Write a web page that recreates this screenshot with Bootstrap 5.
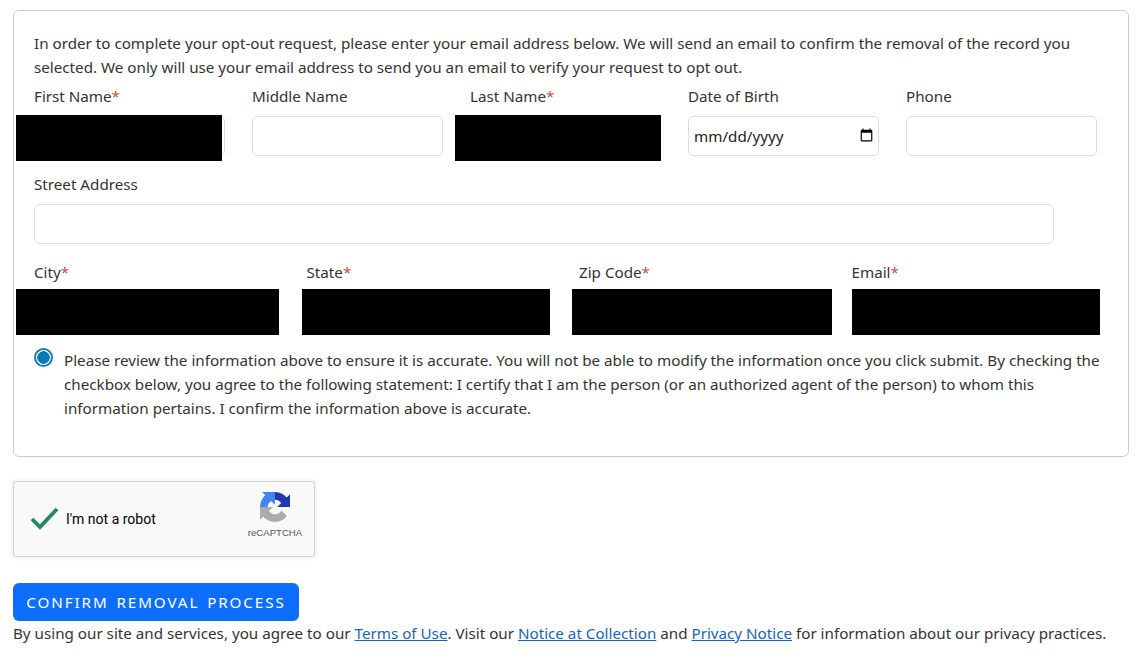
<!DOCTYPE html>
<html lang="en"><head><meta charset="utf-8"><title>Confirm removal</title>
<link href="https://cdn.jsdelivr.net/npm/bootstrap@5.3.0/dist/css/bootstrap.min.css" rel="stylesheet">
<style>
body{font-family:"Noto Sans","Open Sans",sans-serif;font-size:15.2px;line-height:24px;color:#333;background:#fff;padding:10px 12px 0 13px;overflow:hidden}
.panel{border:1px solid #ccc;border-radius:6px;padding:20px 20px 24px 20px;height:447px}
.panel p{margin:0 0 5px}
.fld-label{display:block;margin:0 0 8px;height:24px}
.req{color:#c0533a}
.fld{height:40px;border:1px solid #ddd;border-radius:5px;padding:0 5px;font:inherit;color:#222;display:block}
.fld::-webkit-calendar-picker-indicator{margin:0 -3px 0 0;filter:contrast(2)}
.cell-s{flex:0 0 218px}.cell-s .fld{width:191px}
.wide{width:1020px}
.rowa,.rowb,.rowc{margin-bottom:16px}
.cell-m{flex:0 0 272.5px}.cell-m .fld{width:240px}
.holder{position:relative}
.mask{position:absolute;background:#000;z-index:2;height:46px}
.m1,.m3{top:31px;width:206px}
.m1{left:-18px}.m3{left:-15px}
.c1,.c2,.c3,.c4{top:29px}
.c1{left:-18px;width:263px}.c2{left:-4.5px;width:248px}.c3{left:-7px;width:260px}.c4{left:.5px;width:248px}
.radio-dot{appearance:none;width:19px;height:19px;flex:none;border-radius:50%;border:2px solid #1a7fb0;background:radial-gradient(circle,#0d7ab5 0 6px,#fff 6.5px);margin:0 11px 0 0}
.robot{width:302px;height:76px;background:#f9f9f9;border:1px solid #d3d3d3;border-radius:3px;box-shadow:0 0 4px 1px rgba(0,0,0,.08);margin-top:24px;font-family:Roboto,"Liberation Sans",sans-serif;font-size:14px;color:#000;position:relative}
.robot-lbl{margin-left:6px}
.rc-brand{position:absolute;left:229px;top:10px;width:64px;font-family:"Liberation Sans",sans-serif;font-size:9.6px;line-height:12px;color:#555}
.rc-icon{margin-bottom:5px}
.go{margin-top:26px;background:#0d6efd;color:#fff;border:0;border-radius:6px;height:38px;width:286px;padding:0;font-size:15.2px;letter-spacing:1.9px;word-spacing:2px;display:block}
.legal{margin:0}
.legal a{color:#1a64b4}
</style></head><body>
<div class="panel">
<p>In order to complete your opt-out request, please enter your email address below. We will send an email to confirm the removal of the record you selected. We only will use your email address to send you an email to verify your request to opt out.</p>
<div class="d-flex rowa">
<div class="cell-s holder"><label class="fld-label">First Name<span class="req">*</span></label><input class="fld" type="text"><div class="mask m1"></div></div>
<div class="cell-s"><label class="fld-label">Middle Name</label><input class="fld" type="text"></div>
<div class="cell-s holder"><label class="fld-label">Last Name<span class="req">*</span></label><input class="fld" type="text"><div class="mask m3"></div></div>
<div class="cell-s"><label class="fld-label">Date of Birth</label><input class="fld" type="date"></div>
<div class="cell-s"><label class="fld-label">Phone</label><input class="fld" type="text"></div>
</div>
<div class="rowb"><label class="fld-label">Street Address</label><input class="fld wide" type="text"></div>
<div class="d-flex rowc">
<div class="cell-m holder"><label class="fld-label">City<span class="req">*</span></label><input class="fld" type="text"><div class="mask c1"></div></div>
<div class="cell-m holder"><label class="fld-label">State<span class="req">*</span></label><input class="fld" type="text"><div class="mask c2"></div></div>
<div class="cell-m holder"><label class="fld-label">Zip Code<span class="req">*</span></label><input class="fld" type="text"><div class="mask c3"></div></div>
<div class="cell-m holder"><label class="fld-label">Email<span class="req">*</span></label><input class="fld" type="text"><div class="mask c4"></div></div>
</div>
<div class="d-flex"><input class="radio-dot" type="radio" checked><div>Please review the information above to ensure it is accurate. You will not be able to modify the information once you click submit. By checking the checkbox below, you agree to the following statement: I certify that I am the person (or an authorized agent of the person) to whom this information pertains. I confirm the information above is accurate.</div></div>
</div>
<div class="robot d-flex align-items-center">
<svg class="ms-3" width="30" height="24" viewBox="0 0 30 24"><path d="M2 12l8 8L27 2" fill="none" stroke="#1f8a5a" stroke-width="3.8"/></svg>
<span class="robot-lbl">I'm not a robot</span>
<div class="text-center rc-brand">
<svg width="30" height="30" viewBox="0 0 64 64" class="d-block mx-auto rc-icon">
<path d="M64 31.955l-.033-1.37V4.687l-7.16 7.16C50.948 4.674 42.033.093 32.05.093c-10.4 0-19.622 4.96-25.458 12.64l11.736 11.86a15.55 15.55 0 0 1 4.754-5.334c2.05-1.6 4.952-2.906 8.968-2.906.485 0 .86.057 1.135.163 4.976.393 9.288 3.14 11.827 7.124l-8.307 8.307c10.522-.04 22.4-.066 27.295.005" fill="#1c3aa9"/>
<path d="M31.862.094l-1.37.033H4.594l7.16 7.16C4.58 13.147 0 22.06 0 32.046c0 10.4 4.96 19.622 12.64 25.458l11.86-11.736a15.55 15.55 0 0 1-5.334-4.754c-1.6-2.05-2.906-4.952-2.906-8.968 0-.485.057-.86.163-1.135.393-4.976 3.14-9.288 7.124-11.827l8.307 8.307c-.04-10.522-.066-22.4.005-27.295" fill="#4285f4"/>
<path d="M.001 32.045l.033 1.37v25.898l7.16-7.16c5.86 7.173 14.775 11.754 24.76 11.754 10.4 0 19.622-4.96 25.458-12.64l-11.736-11.86a15.55 15.55 0 0 1-4.754 5.334c-2.05 1.6-4.952 2.906-8.968 2.906-.485 0-.86-.057-1.135-.163-4.976-.393-9.288-3.14-11.827-7.124l8.307-8.307c-10.522.04-22.4.066-27.295-.005" fill="#ababab"/>
</svg>reCAPTCHA</div>
</div>
<button class="go" type="button">CONFIRM REMOVAL PROCESS</button>
<p class="legal">By using our site and services, you agree to our <a href="#">Terms of Use</a>. Visit our <a href="#">Notice at Collection</a> and <a href="#">Privacy Notice</a> for information about our privacy practices.</p>
</body></html>
